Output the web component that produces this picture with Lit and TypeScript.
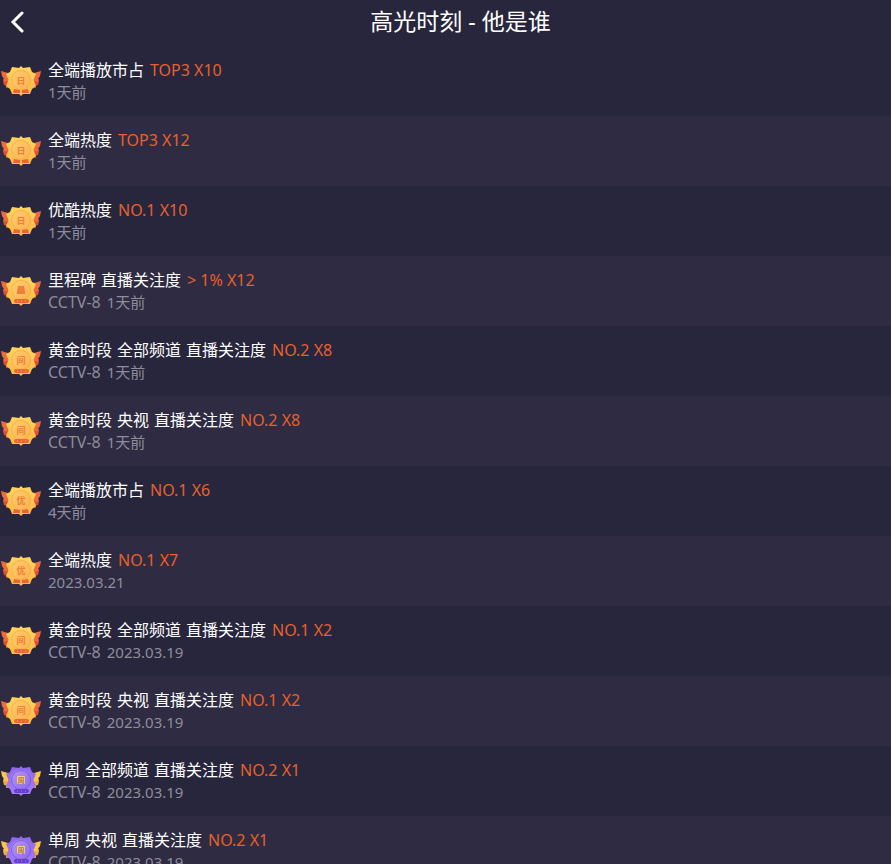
import { LitElement, html, svg, css, nothing } from "lit";
import { customElement, property } from "lit/decorators.js";

type Tone = "gold" | "purple";

interface Moment {
  title: string;
  rank: string;
  channel: string;
  date: string;
  mark: string;
  tone: Tone;
}

const moment = (
  title: string,
  rank: string,
  channel: string,
  date: string,
  mark: string,
  tone: Tone = "gold"
): Moment => ({ title, rank, channel, date, mark, tone });

const MOMENTS: Moment[] = [
  moment("全端播放市占", "TOP3 X10", "", "1天前", "日"),
  moment("全端热度", "TOP3 X12", "", "1天前", "日"),
  moment("优酷热度", "NO.1 X10", "", "1天前", "日"),
  moment("里程碑 直播关注度", "> 1% X12", "CCTV-8", "1天前", "碑"),
  moment("黄金时段 全部频道 直播关注度", "NO.2 X8", "CCTV-8", "1天前", "间"),
  moment("黄金时段 央视 直播关注度", "NO.2 X8", "CCTV-8", "1天前", "间"),
  moment("全端播放市占", "NO.1 X6", "", "4天前", "优"),
  moment("全端热度", "NO.1 X7", "", "2023.03.21", "优"),
  moment("黄金时段 全部频道 直播关注度", "NO.1 X2", "CCTV-8", "2023.03.19", "间"),
  moment("黄金时段 央视 直播关注度", "NO.1 X2", "CCTV-8", "2023.03.19", "间"),
  moment("单周 全部频道 直播关注度", "NO.2 X1", "CCTV-8", "2023.03.19", "周", "purple"),
  moment("单周 央视 直播关注度", "NO.2 X1", "CCTV-8", "2023.03.19", "周", "purple"),
];

@customElement("medal-badge")
export class MedalBadge extends LitElement {
  @property() mark = "";
  @property({ reflect: true }) tone: Tone = "gold";

  static styles = css`
    :host {
      display: block;
      flex: none;
      width: 40px;
      height: 32px;
      --wing: #ee6c3c;
      --wing-low: #dc4f35;
      --edge-top: #ffd75c;
      --edge-bottom: #fbb843;
      --face-top: #ffcf70;
      --face-bottom: #fdb04f;
      --ring: #f5ab45;
      --ink: #ef8038;
      --ribbon: #e8663a;
      --plate: transparent;
    }
    :host([tone="purple"]) {
      --wing: #fdc544;
      --wing-low: #f0a93c;
      --edge-top: #8f66ee;
      --edge-bottom: #a67ef8;
      --face-top: #b697fb;
      --face-bottom: #8a67e6;
      --ring: #7450d8;
      --ink: #b0764a;
      --ribbon: #6440cc;
      --plate: #f9cd7c;
    }
    svg { display: block; width: 100%; height: 100%; }
    .wing { fill: var(--wing); }
    .wing-low { fill: var(--wing-low); }
    .edge-top { stop-color: var(--edge-top); }
    .edge-bottom { stop-color: var(--edge-bottom); }
    .face-top { stop-color: var(--face-top); }
    .face-bottom { stop-color: var(--face-bottom); }
    .ring { stroke: var(--ring); }
    .plate { fill: var(--plate); }
    .ribbon { fill: var(--ribbon); }
    .stud { fill: var(--edge-bottom); }
    .block { fill: var(--ink); }
    .mark {
      fill: var(--ink);
      font: 700 9px "Noto Sans CJK SC", sans-serif;
      text-anchor: middle;
    }
    :host([tone="purple"]) .mark { font-size: 7px; }
  `;

  private ribbon() {
    const bow = this.mark === "日" || this.mark === "优";
    return bow
      ? svg`<path class="ribbon" d="M13 24 L19 25 V28 H12Z M27 24 L21 25 V28 H28Z" />`
      : svg`<rect class="ribbon" x="13" y="24" width="15" height="4" rx="2" />
          <path class="stud" d="M16 25.5h1v1h-1z M20 25.5h1v1h-1z M24 25.5h1v1h-1z" />`;
  }

  render() {
    return html`<svg viewBox="0 0 40 32" aria-hidden="true">
      <defs>
        <linearGradient id="edge" x1="0" y1="0" x2="0" y2="1">
          <stop class="edge-top" offset="0" />
          <stop class="edge-bottom" offset="1" />
        </linearGradient>
        <linearGradient id="face" x1="0" y1="0" x2="1" y2="1">
          <stop class="face-top" offset="0" />
          <stop class="face-bottom" offset="1" />
        </linearGradient>
      </defs>
      <path class="wing" d="M0 6 L7 8 L12 12 V18 H3 L2 14.5 L3 14 L1 11Z M40 6 L33 8 L28 12 V18 H37 L38 14.5 L37 14 L39 11Z" />
      <path class="wing-low" d="M2 16 L12 17 V22 L5 23 L5 20.5 L3 20Z M38 16 L28 17 V22 L35 23 L35 20.5 L37 20Z" />
      <path
        fill="url(#edge)"
        d="M20 1 L22 3 L29 2 L31 7 L35 9 L32.5 15 L35 21 L31 24 L29 29 L22 29 L20 31 L18 29 L11 29 L9 24 L5 21 L7.5 15 L5 9 L9 7 L11 2 L18 3Z"
      />
      <circle cx="20" cy="15" r="10.5" fill="url(#face)" />
      <circle class="ring" cx="20" cy="15" r="9.5" fill="none" stroke-width="0.8" />
      <rect class="plate" x="16" y="11" width="8" height="8" rx="1" />
      ${this.ribbon()}
      ${this.mark === "碑"
        ? svg`<path class="block" d="M17 11h6l1 6v2h-8v-2z" />`
        : svg`<text class="mark" x="20" y=${this.tone === "purple" ? 18 : 19}>${this.mark}</text>`}
    </svg>`;
  }
}

@customElement("app-root")
export class AppRoot extends LitElement {
  static styles = css`
    :host {
      display: block;
      height: 100vh;
      overflow-y: auto;
      scrollbar-width: none;
      background: #28263d;
      color: #fff;
      font-family: "Noto Sans", "Noto Sans CJK SC", sans-serif;
    }
    header {
      display: grid;
      grid-template-columns: 40px 1fr 10px;
      align-items: center;
      height: 46px;
    }
    .back {
      display: flex;
      margin: 0;
      padding: 0 0 3px 10px;
      border: 0;
      background: none;
      color: inherit;
    }
    h1 {
      margin: 0;
      padding-bottom: 4px;
      font-size: 23px;
      font-weight: 400;
      line-height: 28px;
      text-align: center;
    }
    ul { margin: 0; padding: 0; list-style: none; }
    .row {
      box-sizing: border-box;
      display: flex;
      align-items: center;
      gap: 7px;
      height: 70px;
      padding-left: 1px;
    }
    .row:nth-child(even) { background: #2e2b42; }
    .line,
    .title,
    .meta {
      display: flex;
      align-items: baseline;
      margin: 0;
      white-space: nowrap;
      font-weight: 400;
      line-height: 22px;
    }
    .line,
    .meta { gap: 6px; }
    .title { gap: 5px; }
    .title,
    .rank,
    .channel { font-size: 16px; }
    .rank { color: #e7602b; }
    .meta { color: #8f8d9b; font-size: 15px; }
  `;

  render() {
    return html`
      <header>
        <button class="back" aria-label="返回">
          <svg width="14" height="22" viewBox="0 0 14 22" fill="none" stroke="#fff" stroke-width="3" stroke-linecap="round">
            <path d="M12 2 L3 11 L12 20" />
          </svg>
        </button>
        <h1>高光时刻 - 他是谁</h1>
      </header>
      <ul>
        ${MOMENTS.map(
          (m) => html`<li class="row">
            <medal-badge .mark=${m.mark} .tone=${m.tone}></medal-badge>
            <div>
              <div class="line">
                <h2 class="title">${m.title.split(" ").map((word) => html`<span>${word}</span> `)}</h2>
                <span class="rank">${m.rank}</span>
              </div>
              <p class="meta">
                ${m.channel ? html`<span class="channel">${m.channel}</span>` : nothing}
                <span>${m.date}</span>
              </p>
            </div>
          </li>`
        )}
      </ul>
    `;
  }
}
